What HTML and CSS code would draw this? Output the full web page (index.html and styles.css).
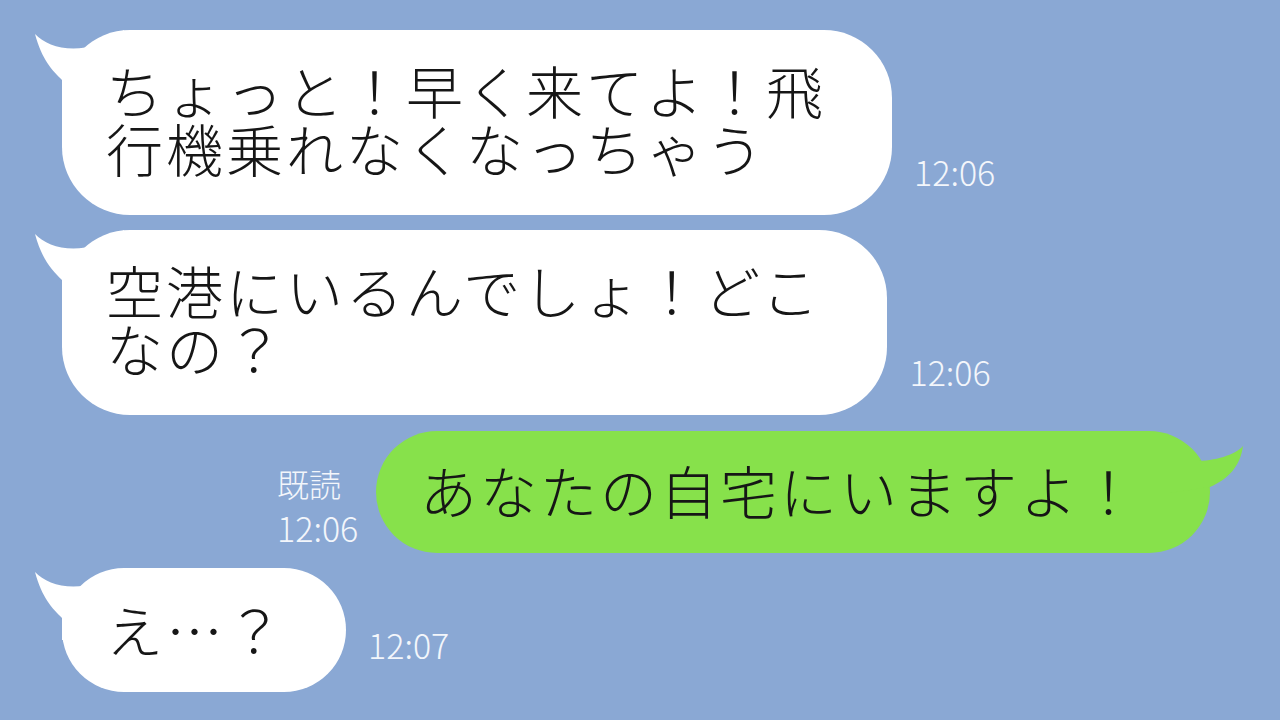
FILE: index.html
```html
<!DOCTYPE html>
<html lang="ja">
<head>
    <meta charset="UTF-8">
    <meta name="viewport" content="width=device-width, initial-scale=1.0">
    <title>トーク</title>
    <link rel="stylesheet" href="styles.css">
</head>
<body>
    <div class="chat">
        <div class="row row-in row-1">
            <div class="bubble bubble-in">
                <svg class="tail tail-in" viewBox="-30 0 92 72" width="92" height="72"><path d="M-27 4 C-12 20 25 28 62 0 L62 72 L0 72 L0 50 C-10 40 -20 30 -27 4 Z"/></svg>
                <p class="msg">ちょっと！早く来てよ！飛<br>行機乗れなくなっちゃう</p>
            </div>
            <div class="time">12:06</div>
        </div>

        <div class="row row-in row-2">
            <div class="bubble bubble-in">
                <svg class="tail tail-in" viewBox="-30 0 92 72" width="92" height="72"><path d="M-27 4 C-12 20 25 28 62 0 L62 72 L0 72 L0 50 C-10 40 -20 30 -27 4 Z"/></svg>
                <p class="msg">空港にいるんでしょ！どこ<br>なの？</p>
            </div>
            <div class="time">12:06</div>
        </div>

        <div class="row row-out">
            <div class="meta">
                <div class="read">既読</div>
                <div class="time">12:06</div>
            </div>
            <div class="bubble bubble-out">
                <svg class="tail tail-out" viewBox="-40 0 80 72" width="80" height="72"><path d="M33 15 C25 24 5 30 -15 30 L-40 30 L-40 62 L0 56 C18 48 30 36 33 15 Z"/></svg>
                <p class="msg">あなたの自宅にいますよ！</p>
            </div>
        </div>

        <div class="row row-in row-4">
            <div class="bubble bubble-in bubble-short">
                <svg class="tail tail-in" viewBox="-30 0 92 72" width="92" height="72"><path d="M-27 4 C-12 20 25 28 62 0 L62 72 L0 72 L0 50 C-10 40 -20 30 -27 4 Z"/></svg>
                <p class="msg">え…？</p>
            </div>
            <div class="time">12:07</div>
        </div>
    </div>
</body>
</html>
```

FILE: styles.css
```css
body {
    margin: 0;
    background: #8aa8d4;
    font-family: "Noto Sans CJK JP", "Noto Sans", sans-serif;
    color: #161616;
}
.chat {
    display: flex;
    flex-direction: column;
    gap: 15px;
    padding-top: 30px;
}
.row {
    display: flex;
    align-items: flex-end;
}
.row-in {
    padding-left: 62px;
}
.row-out {
    padding-left: 277px;
    margin-top: 1px;
}
.bubble {
    position: relative;
    border-radius: 68px;
    padding: 30px 66px 39px 44px;
}
.bubble-in {
    background: #fff;
}
.bubble-out {
    background: #87e14b;
    border-radius: 61px;
    padding: 29px 70px 35px 44px;
}
.bubble-short {
    border-radius: 62px;
    padding: 31px 60px 35px 44px;
}
.msg {
    position: relative;
    margin: 0;
    font-size: 57px;
    font-weight: 300;
    line-height: 58px;
    letter-spacing: 3px;
    white-space: nowrap;
}
.tail {
    position: absolute;
    top: 0;
}
.tail-in {
    left: -30px;
    fill: #fff;
}
.tail-out {
    right: -40px;
    fill: #87e14b;
}
.time {
    font-family: "Noto Sans CJK JP", "DejaVu Sans", sans-serif;
    font-weight: 200;
    font-size: 34px;
    line-height: 1;
    color: #f3f6fb;
}
.row-in .time {
    margin-left: 22px;
    margin-bottom: 26px;
}
.row-4 .time {
    margin-bottom: 30px;
}
.meta {
    width: 99px;
    margin-bottom: 8px;
}
.read {
    font-size: 32px;
    font-weight: 200;
    line-height: 1;
    color: #f3f6fb;
    margin-bottom: 12px;
}
```
